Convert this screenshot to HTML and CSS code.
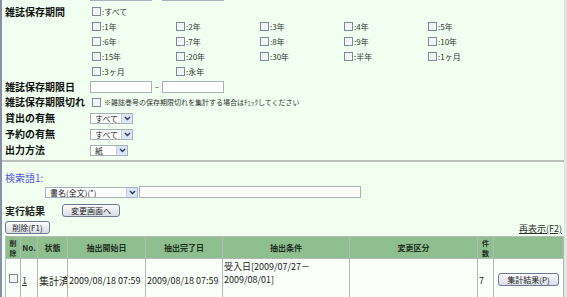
FILE: index.html
```html
<!DOCTYPE html>
<html lang="ja">
<head>
    <meta charset="UTF-8">
    <title>雑誌集計</title>
    <link rel="stylesheet" href="styles.css">
</head>
<body>
<div class="page">
    <div class="form">
        <div class="row cut">
            <div class="label"></div>
            <div class="value"><input class="date" type="text"><span class="dash"></span><input class="date" type="text"></div>
        </div>

        <div class="row period">
            <div class="label top">雑誌保存期間</div>
            <div class="checks">
                <label class="chk"><input type="checkbox">:すべて</label>
                <span></span><span></span><span></span><span></span>
                <label class="chk"><input type="checkbox">:1年</label>
                <label class="chk"><input type="checkbox">:2年</label>
                <label class="chk"><input type="checkbox">:3年</label>
                <label class="chk"><input type="checkbox">:4年</label>
                <label class="chk"><input type="checkbox">:5年</label>
                <label class="chk"><input type="checkbox">:6年</label>
                <label class="chk"><input type="checkbox">:7年</label>
                <label class="chk"><input type="checkbox">:8年</label>
                <label class="chk"><input type="checkbox">:9年</label>
                <label class="chk"><input type="checkbox">:10年</label>
                <label class="chk"><input type="checkbox">:15年</label>
                <label class="chk"><input type="checkbox">:20年</label>
                <label class="chk"><input type="checkbox">:30年</label>
                <label class="chk"><input type="checkbox">:半年</label>
                <label class="chk"><input type="checkbox">:1ヶ月</label>
                <label class="chk"><input type="checkbox">:3ヶ月</label>
                <label class="chk"><input type="checkbox">:永年</label>
            </div>
        </div>

        <div class="row h15">
            <div class="label">雑誌保存期限日</div>
            <div class="value"><input class="date" type="text"><span class="dash">–</span><input class="date" type="text"></div>
        </div>

        <div class="row">
            <div class="label">雑誌保存期限切れ</div>
            <div class="value"><label class="chk note"><input type="checkbox">※雑誌巻号の保存期限切れを集計する場合はﾁｪｯｸしてください</label></div>
        </div>

        <div class="row">
            <div class="label">貸出の有無</div>
            <div class="value"><span class="select w43"><span class="val">すべて</span><span class="arrow"><svg width="7" height="5" viewBox="0 0 7 5"><path d="M1 1 L3.5 3.5 L6 1" fill="none" stroke="#2c3a60" stroke-width="1.4"/></svg></span></span></div>
        </div>

        <div class="row">
            <div class="label">予約の有無</div>
            <div class="value"><span class="select w43"><span class="val">すべて</span><span class="arrow"><svg width="7" height="5" viewBox="0 0 7 5"><path d="M1 1 L3.5 3.5 L6 1" fill="none" stroke="#2c3a60" stroke-width="1.4"/></svg></span></span></div>
        </div>

        <div class="row">
            <div class="label">出力方法</div>
            <div class="value"><span class="select w38"><span class="val">紙</span><span class="arrow"><svg width="7" height="5" viewBox="0 0 7 5"><path d="M1 1 L3.5 3.5 L6 1" fill="none" stroke="#2c3a60" stroke-width="1.4"/></svg></span></span></div>
        </div>
    </div>

    <div class="search">
        <div class="search-label">検索語1:</div>
        <div class="search-row">
            <span class="select w93"><span class="val">書名(全文)(*)</span><span class="arrow"><svg width="7" height="5" viewBox="0 0 7 5"><path d="M1 1 L3.5 3.5 L6 1" fill="none" stroke="#2c3a60" stroke-width="1.4"/></svg></span></span><input class="word" type="text">
        </div>
    </div>

    <div class="result-head">
        <span class="result-title">実行結果</span>
        <button class="btn change">変更画面へ</button>
    </div>

    <div class="actions">
        <button class="btn del">削除(F1)</button>
        <a class="reload" href="#">再表示(F2)</a>
    </div>

    <table class="results">
        <colgroup>
            <col style="width:15px"><col style="width:17px"><col style="width:30px"><col style="width:78px"><col style="width:77px"><col style="width:127px"><col style="width:128px"><col style="width:16px"><col style="width:70px">
        </colgroup>
        <thead>
            <tr>
                <th class="stack">削<br>除</th>
                <th>No.</th>
                <th>状態</th>
                <th>抽出開始日</th>
                <th>抽出完了日</th>
                <th>抽出条件</th>
                <th>変更区分</th>
                <th class="stack">件<br>数</th>
                <th></th>
            </tr>
        </thead>
        <tbody>
            <tr>
                <td class="c"><input type="checkbox" class="box"></td>
                <td><a href="#" class="no">1</a></td>
                <td class="status">集計済</td>
                <td class="dt">2009/08/18 07:59</td>
                <td class="dt">2009/08/18 07:59</td>
                <td class="cond">受入日[2009/07/27－<br>2009/08/01]</td>
                <td></td>
                <td class="num">7</td>
                <td class="c"><button class="btn sum">集計結果(P)</button></td>
            </tr>
        </tbody>
    </table>
</div>
</body>
</html>
```

FILE: styles.css
```css
body {
    margin: 0;
    background-color: #f0fff0;
    font-family: "Noto Sans CJK JP", "Noto Sans", sans-serif;
    font-size: 9px;
    color: #222;
}
.page {
    border-left: 2px solid #8a90aa;
    border-right: 3px solid #e2e6e2;
    min-height: 297px;
    overflow: hidden;
}
.form {
    padding-bottom: 2px;
    border-bottom: 2px solid #b9c2b9;
}
.row {
    display: flex;
    align-items: center;
    height: 16px;
}
.row.cut {
    height: 12px;
    margin-top: -11px;
}
.row.h15 {
    height: 15px;
}
.row.period {
    height: auto;
    align-items: flex-start;
    padding-top: 3px;
}
.label {
    flex: none;
    width: 85px;
    padding-left: 3px;
    font-size: 10px;
    font-weight: bold;
    line-height: 12px;
    color: #111;
    white-space: nowrap;
}
.label.top {
    line-height: 15px;
}
.value {
    display: flex;
    align-items: center;
}
.checks {
    display: grid;
    grid-template-columns: repeat(5, 84px);
    grid-auto-rows: 15px;
    align-items: center;
}
.chk {
    display: flex;
    align-items: center;
    font-size: 8px;
    line-height: 10px;
    color: #333;
    white-space: nowrap;
}
.chk input,
.box {
    appearance: none;
    width: 9px;
    height: 9px;
    margin: 0 1px 0 2px;
    border: 1px solid #7c8b9c;
    background: #f3f5f7;
    box-sizing: border-box;
}
.chk.note {
    font-size: 7px;
}
.chk.note input {
    margin-right: 3px;
}
input.date {
    width: 62px;
    height: 12px;
    box-sizing: border-box;
    border: 1px solid #a9b2bb;
    background: #fff;
    margin: 0;
}
.dash {
    width: 10px;
    text-align: center;
    font-size: 8px;
    color: #333;
}
.select {
    display: flex;
    align-items: center;
    height: 11px;
    box-sizing: border-box;
    border: 1px solid #a9b2bb;
    background: #fff;
    font-size: 8px;
    line-height: 9px;
}
.select .val {
    flex: 1;
    padding-left: 4px;
    white-space: nowrap;
    overflow: hidden;
}
.select .arrow {
    width: 10px;
    height: 9px;
    display: flex;
    align-items: center;
    justify-content: center;
    background: #dde6f4;
    border-left: 1px solid #c3cde0;
}
.w43 { width: 43px; }
.w38 { width: 38px; }
.w93 { width: 93px; }

.search {
    padding-left: 3px;
    margin-top: 9px;
}
.search-label {
    height: 14px;
    line-height: 14px;
    font-size: 10px;
    color: #5656e0;
}
.search-row {
    display: flex;
    align-items: center;
    height: 14px;
    padding-left: 40px;
}
input.word {
    width: 222px;
    height: 12px;
    box-sizing: border-box;
    border: 1px solid #a9b2bb;
    background: #fff;
    margin: 0 0 0 1px;
}
.result-head {
    display: flex;
    align-items: center;
    height: 14px;
    margin-top: 4px;
    padding-left: 3px;
}
.result-title {
    font-size: 10px;
    font-weight: bold;
    width: 57px;
}
.btn {
    height: 13px;
    padding: 0;
    font-family: "Noto Sans CJK JP", sans-serif;
    font-size: 8px;
    line-height: 11px;
    color: #222;
    background: linear-gradient(#fbfbfd, #dadce6);
    border: 1px solid #6f7a92;
    border-radius: 3px;
}
.btn.change { width: 58px; }
.btn.del { width: 45px; }
.btn.sum { width: 61px; }
.actions {
    display: flex;
    justify-content: space-between;
    align-items: center;
    height: 14px;
    margin-top: 3px;
    padding-left: 3px;
    padding-right: 2px;
}
.reload {
    font-size: 9px;
    color: #333;
    text-decoration: underline;
    margin-top: 3px;
}
.results {
    margin: 2px 0 0 3px;
    width: 558px;
    table-layout: fixed;
    border-collapse: collapse;
}
.results th,
.results td {
    border: 1px solid #b3bab3;
    padding: 0 1px;
    overflow: hidden;
}
.results th {
    height: 21px;
    background-color: #8fbf8f;
    font-size: 8px;
    line-height: 9px;
    font-weight: bold;
    color: #1e2e1e;
    text-align: center;
}
.results th.stack {
    font-size: 7px;
    line-height: 10px;
    padding: 0;
}
.results td {
    height: 34px;
    background-color: #fafffa;
    vertical-align: middle;
    padding-top: 4px;
    white-space: nowrap;
}
.results td.c {
    text-align: center;
    padding-top: 2px;
}
.results .box {
    margin: 0;
}
.no {
    color: #333;
    font-size: 9px;
}
.status {
    font-size: 10px;
}
.dt {
    font-size: 9px;
}
.results td.cond {
    vertical-align: top;
    padding-top: 1px;
    font-size: 9px;
    line-height: 13px;
    white-space: normal;
}
.num {
    font-size: 9px;
}
```
